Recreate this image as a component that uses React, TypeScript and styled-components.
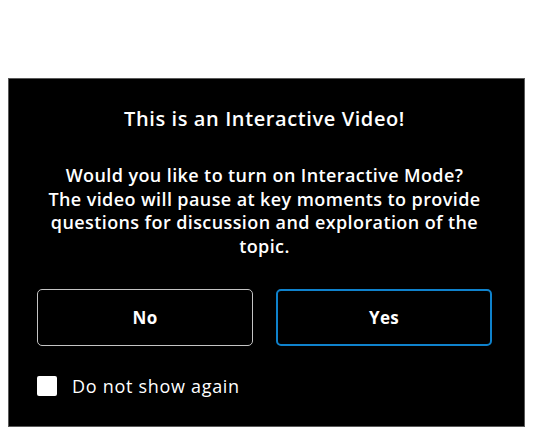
import React, { useState } from "react";
import styled, { createGlobalStyle } from "styled-components";

const Global = createGlobalStyle`
  body {
    margin: 8px;
    background: #ffffff;
    font-family: "Open Sans", Lato, "Liberation Sans", sans-serif;
  }
`;

const Page = styled.div`
  padding-top: 70px;
`;

const Panel = styled.div`
  box-sizing: border-box;
  width: 517px;
  height: 349px;
  background: #000;
  border: 1px solid #5a5a5a;
  color: #fff;
  display: flex;
  flex-direction: column;
  padding: 28px 32px 0 28px;
`;

const Title = styled.h2`
  margin: 0;
  font-size: 20px;
  line-height: 24px;
  font-weight: 600;
  text-align: center;
  letter-spacing: 0.6px;
`;

const Message = styled.p`
  margin: 33px auto 0;
  width: 452px;
  font-size: 18px;
  line-height: 23.5px;
  font-weight: 600;
  text-align: center;
  letter-spacing: 0.4px;
`;

const Actions = styled.div`
  display: flex;
  gap: 23px;
  margin-top: 31px;
`;

const ChoiceButton = styled.button<{ $primary?: boolean }>`
  box-sizing: border-box;
  width: 216px;
  height: 57px;
  background: #000;
  color: #fff;
  border: ${(p) => (p.$primary ? "2px solid #0f82cc" : "1.5px solid #c4c4c4")};
  border-radius: 5px;
  font-family: inherit;
  font-size: 17px;
  font-weight: 700;
  letter-spacing: 0.3px;
  cursor: pointer;
`;

const CheckRow = styled.label`
  display: flex;
  align-items: center;
  gap: 15px;
  margin-top: 28px;
  font-size: 18px;
  font-weight: 500;
  letter-spacing: 0.7px;
  cursor: pointer;
`;

const Box = styled.span`
  width: 20px;
  height: 20px;
  border-radius: 2px;
  background: #fff;
  flex: none;
`;

export default function App() {
  const [checked, setChecked] = useState(false);
  return (
    <>
      <Global />
      <Page>
        <Panel>
          <Title>This is an Interactive Video!</Title>
          <Message>
            Would you like to turn on Interactive Mode?
            <br />
            The video will pause at key moments to provide questions for
            discussion and exploration of the topic.
          </Message>
          <Actions>
            <ChoiceButton>No</ChoiceButton>
            <ChoiceButton $primary>Yes</ChoiceButton>
          </Actions>
          <CheckRow onClick={() => setChecked(!checked)}>
            <Box />
            Do not show again
          </CheckRow>
        </Panel>
      </Page>
    </>
  );
}
